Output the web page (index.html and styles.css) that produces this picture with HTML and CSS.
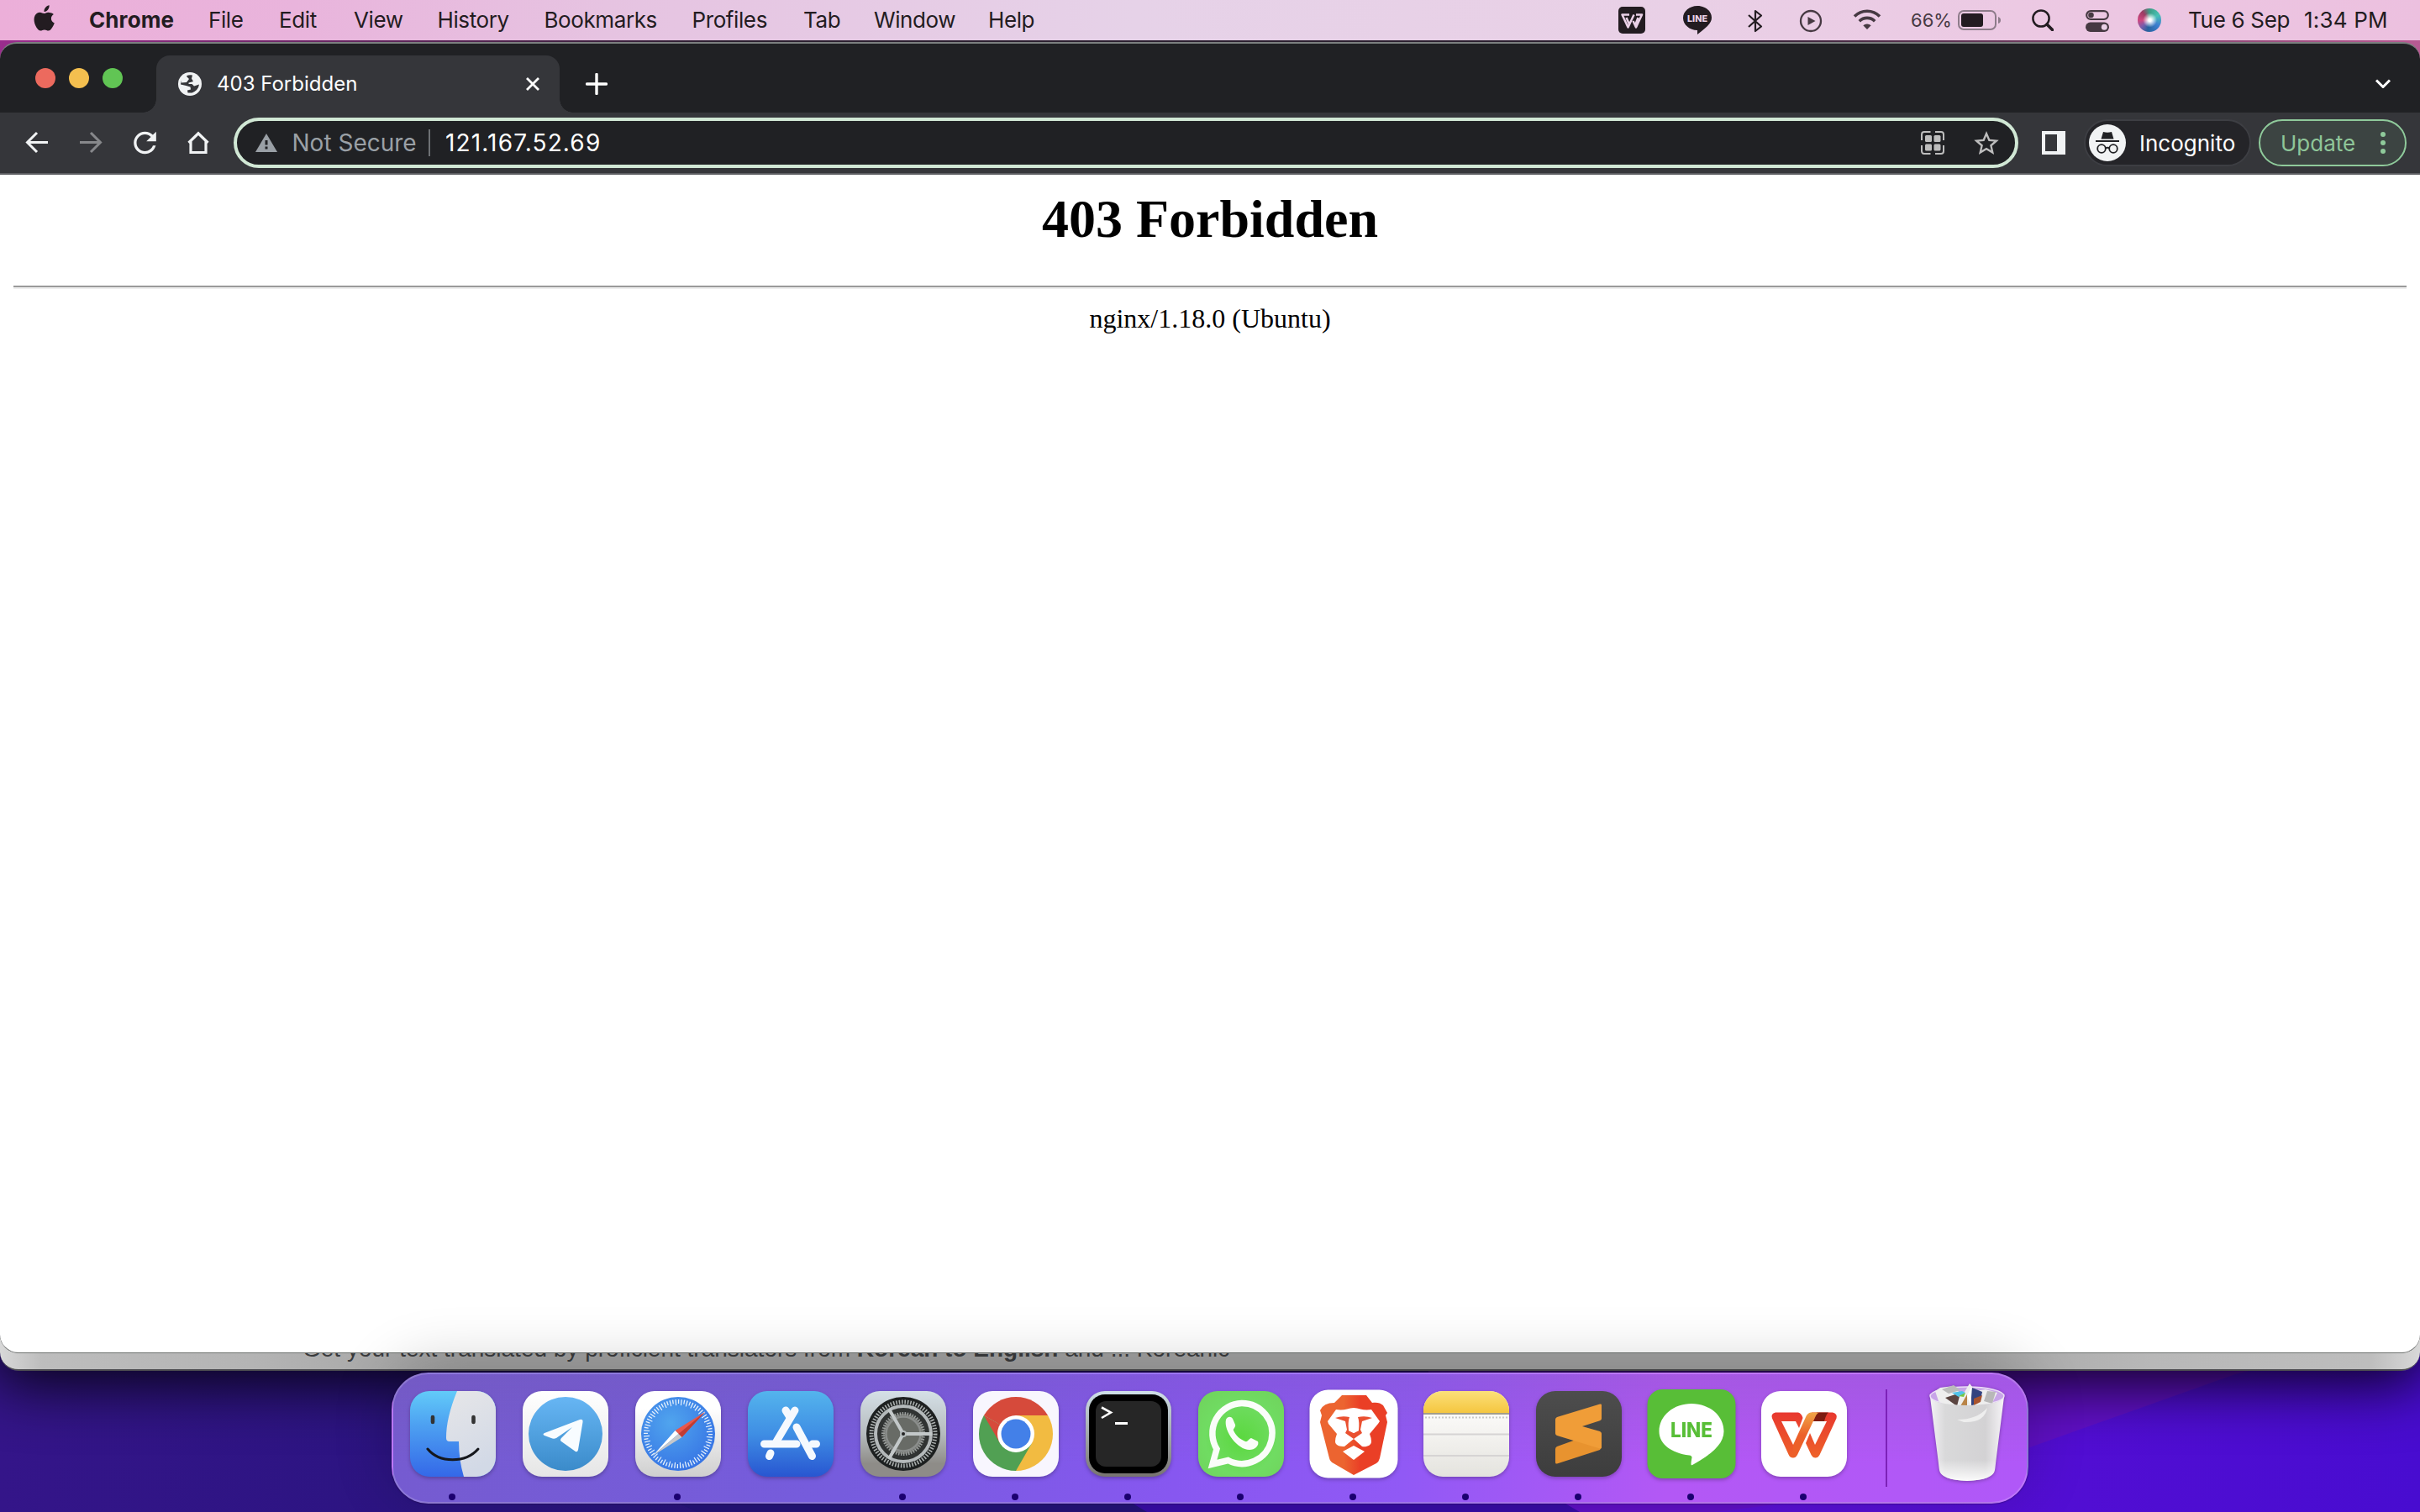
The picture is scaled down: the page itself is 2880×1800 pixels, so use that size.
FILE: index.html
```html
<!DOCTYPE html>
<html lang="en">
<head>
<meta charset="utf-8">
<title>403 Forbidden</title>
<link rel="stylesheet" href="styles.css">
</head>
<body>
<div class="desktop">
  <svg class="wallpaper" viewBox="0 0 2880 200" preserveAspectRatio="none">
    <defs>
      <linearGradient id="wl" x1="0" x2="1"><stop offset="0" stop-color="#341589"/><stop offset=".2" stop-color="#2a1480"/><stop offset="1" stop-color="#1d125e"/></linearGradient>
      <linearGradient id="wr" x1="0" x2="1"><stop offset="0" stop-color="#5b10d6"/><stop offset="1" stop-color="#480cd0"/></linearGradient>
    </defs>
    <rect width="2880" height="200" fill="url(#wl)"/>
    <path d="M700 0V140Q800 186 830 200H2880V0Z" fill="#241478"/>
    <path d="M1100 0L1345 188L1365 200H2880V0Z" fill="#380ca6"/>
    <path d="M1700 100L1863 190L1880 200H2880V0H1700Z" fill="#6010c6"/>
    <path d="M2040 200Q2300 170 2413 124L2480 100L2660 36L2880 -20V200Z" fill="url(#wr)"/>
  </svg>

  <header class="menubar">
    <svg class="apple" viewBox="0 0 26 32"><path d="M18.6 0.3c.2 2.300-.7 4.200-1.900 5.600-1.200 1.300-2.700 2.100-4.200 2-.2-2 .7-3.900 1.800-5.200C15.500 1.300 17.200.500 18.600.3zM23.900 10.900c-2 1.300-3 3-3 5.100 0 2.500 1.400 4.500 3.900 5.500-.6 1.900-1.600 3.800-2.800 5.500-1.200 1.700-2.400 3.500-4.400 3.500-1.900 0-2.500-1.100-4.700-1.100s-2.900 1.100-4.700 1.200c-1.900 0-3.300-1.900-4.600-3.700C1.100 23.200-.7 17 1.600 12.600 2.800 10.300 5 8.800 7.500 8.800c1.900 0 3.600 1.300 4.800 1.300s3.300-1.600 5.500-1.400c1 .1 3.800.4 6.100 2.200z"/></svg>
    <nav class="menus">
      <b class="m-chrome">Chrome</b><span class="m-file">File</span><span class="m-edit">Edit</span><span class="m-view">View</span><span class="m-history">History</span><span class="m-bookmarks">Bookmarks</span><span class="m-profiles">Profiles</span><span class="m-tab">Tab</span><span class="m-window">Window</span><span>Help</span>
    </nav>
    <div class="status">
      <svg width="32" height="32" viewBox="0 0 32 32"><rect width="32" height="32" rx="5" fill="#231c21"/><path d="M13 9.500H4.500L11.500 24.500 18.500 9.500M9.500 13l3.500 8M21 9.500h7L21 24.500 17.500 17M20 22l3.500-9" fill="none" stroke="#ead0e6" stroke-width="2.500" stroke-linejoin="round"/></svg>
      <svg class="s-line" width="34" height="34" viewBox="0 0 34 34"><path d="M17 0c9.500 0 17 6.300 17 14 0 7-6 11-17 20v-5C7.500 29 0 22 0 14.500 0 6.500 7.500 0 17 0z" fill="#231c21"/><text x="17" y="18.500" text-anchor="middle" textLength="24" lengthAdjust="spacingAndGlyphs" class="line-glyph" font-size="11" fill="#ead0e6">LINE</text></svg>
      <svg class="s-bt" width="18" height="28" viewBox="0 0 18 28"><path d="M1 7l15 13.500L9 26V2l7 5.500L1 21" fill="none" stroke="#231c21" stroke-width="2.200" stroke-linejoin="round"/></svg>
      <svg class="s-play" width="28" height="28" viewBox="0 0 28 28"><circle cx="14" cy="14" r="12" fill="none" stroke="#463942" stroke-width="2.300"/><path d="M10.500 9v10l9-5z" fill="#463942"/></svg>
      <svg class="s-wifi" width="34" height="26" viewBox="0 0 34 26"><g fill="none" stroke="#463942" stroke-width="3.600"><path d="M2 9.500a21 21 0 0 1 30 0"/><path d="M7.800 15.200a13 13 0 0 1 18.400 0"/></g><path d="M12.300 20.300a7 7 0 0 1 9.400 0L17 25z" fill="#463942"/></svg>
      <span class="battery-text">66%</span>
      <svg class="s-bat" width="52" height="24" viewBox="0 0 52 24"><rect x="1" y="1" width="44" height="22" rx="6" fill="none" stroke="#8d7c8a" stroke-width="2"/><rect x="4" y="4" width="26" height="16" rx="3" fill="#231c21"/><path d="M48 8v8q3-1 3-4t-3-4z" fill="#8d7c8a"/></svg>
      <svg class="s-search" width="26" height="26" viewBox="0 0 26 26"><circle cx="11" cy="11" r="9.600" fill="none" stroke="#231c21" stroke-width="2.500"/><path d="M18 18l6.500 6.500" stroke="#231c21" stroke-width="3.600" stroke-linecap="round"/></svg>
      <svg class="s-cc" width="28" height="26" viewBox="0 0 28 26"><rect x="1.200" y="1.200" width="25.600" height="9.800" rx="4.900" fill="none" stroke="#463942" stroke-width="2.200"/><circle cx="6.500" cy="6" r="3.300" fill="#463942"/><rect y="14.500" width="28" height="11.500" rx="5.700" fill="#463942"/><circle cx="22.300" cy="20.300" r="3.500" fill="#ead0e6"/></svg>
      <span class="siri"></span>
      <span class="date">Tue 6 Sep</span><span class="time">1:34 PM</span>
    </div>
  </header>

  <section class="back-window"><p>Get your text translated by proficient translators from <b>Korean to English</b> and ... Koreanic</p></section>

  <section class="browser">
    <div class="tabstrip">
      <div class="lights"><i class="red"></i><i class="yellow"></i><i class="green"></i></div>
      <div class="tab">
        <svg width="28" height="28" viewBox="0 0 28 28"><circle cx="14" cy="14" r="14" fill="#f1f3f4"/><path d="M10.500 4Q13 3 17 3.500L16 7.500 18 11 12.500 12.500 12.500 14 16.500 14 19 16.500 25 14.500Q24 21.500 16.500 24.500L11.500 24.500 11 21.500 15 20.500 14.500 17.500 9.500 16 3 14.500Q3 12 4 10L9 12 11.500 9.500 9.500 7.500Z" fill="#35363a"/><path d="M3.500 12.500Q5 6 9.500 4.500l3.500 3.500-3 4z" fill="#f1f3f4"/></svg>
        <span class="tab-title">403 Forbidden</span>
        <svg width="18" height="18" viewBox="0 0 18 18"><path d="M2 2l14 14M16 2L2 16" stroke="#fff" stroke-width="2.800"/></svg>
      </div>
      <svg class="plus" width="26" height="26" viewBox="0 0 26 26"><path d="M13 1.500v23M1.500 13h23" stroke="#fff" stroke-width="3.400" stroke-linecap="round"/></svg>
      <svg class="chev" width="20" height="14" viewBox="0 0 20 14"><path d="M2 2.500l8 8 8-8" fill="none" stroke="#fff" stroke-width="3" stroke-linejoin="round"/></svg>
    </div>
    <div class="toolbar">
      <svg class="nav" width="64" height="40" viewBox="0 0 64 40"><path d="M45 20H21M32 8.500L20.500 20 32 31.500" transform="translate(12 -.5)" fill="none" stroke="#f1f3f4" stroke-width="3"/></svg>
      <svg class="nav" width="64" height="40" viewBox="0 0 64 40"><path d="M19 20h24M32 8.500L43.500 20 32 31.500" transform="translate(12 -.5)" fill="none" stroke="#87888b" stroke-width="3"/></svg>
      <svg class="nav" width="64" height="40" viewBox="0 0 64 40"><path transform="translate(24.500) scale(1.667)" d="M17.650 6.350C16.200 4.900 14.210 4 12 4c-4.420 0-7.990 3.580-7.990 8s3.570 8 7.990 8c3.730 0 6.840-2.550 7.730-6h-2.080c-.82 2.330-3.040 4-5.650 4-3.310 0-6-2.690-6-6s2.690-6 6-6c1.660 0 3.140.69 4.220 1.780L13 11h7V4l-2.350 2.350z" fill="#f1f3f4"/></svg>
      <svg class="nav" width="64" height="40" viewBox="0 0 64 40"><path d="M32.500 20L44 8.800 55.500 20M35 18v13.500h18V18" fill="none" stroke="#f1f3f4" stroke-width="3.200"/></svg>
      <div class="omnibox">
        <svg width="26" height="22" viewBox="0 0 26 22"><path d="M13 0l13 22H0z" fill="#9aa0a6"/><path d="M11.500 8h3v5.500h-3zM11.500 15.500h3v3h-3z" fill="#202124"/></svg>
        <span class="notsecure">Not Secure</span><i class="bar"></i><span class="url">121.167.52.69</span>
        <svg class="qr" width="28" height="28" viewBox="0 0 28 28"><path d="M1 11V4q0-3 3-3h7.500M17 1h7q3 0 3 3v7M27 17v7q0 3-3 3h-7M11.500 27H4q-3 0-3-3v-7" fill="none" stroke="#bdbdbd" stroke-width="2"/><g fill="#bdbdbd"><rect x="5" y="5" width="8" height="8" rx="1.500"/><rect x="15.500" y="5" width="8" height="8" rx="1.500"/><rect x="5" y="15.500" width="8" height="8" rx="1.500"/><rect x="15.500" y="15.500" width="8" height="8" rx="1.500"/></g></svg>
        <svg width="30" height="28" viewBox="2 2 20 19"><path d="M22 9.240l-7.190-.62L12 2 9.190 8.630 2 9.240l5.460 4.730L5.820 21 12 17.270 18.180 21l-1.630-7.030L22 9.240zM12 15.400l-3.760 2.270 1-4.280-3.320-2.880 4.380-.38L12 6.100l1.710 4.040 4.380.38-3.320 2.880 1 4.280L12 15.400z" fill="#bdbdbd"/></svg>
      </div>
      <svg class="panel" width="28" height="28" viewBox="0 0 28 28"><path fill-rule="evenodd" d="M0 0h28v28H0zM4 4v20h14V4z" fill="#f1f3f4"/></svg>
      <div class="incognito">
        <svg width="44" height="44" viewBox="0 0 44 44"><circle cx="22" cy="22" r="22" fill="#f1f3f4"/><path d="M17 9q5 1.500 10 0l2.500 8.500h-15z" fill="#202124"/><path d="M8 20h28" stroke="#202124" stroke-width="1.800"/><g fill="none" stroke="#202124" stroke-width="1.800"><circle cx="15" cy="29" r="4.800"/><circle cx="29" cy="29" r="4.800"/><path d="M19.500 28.500q2.500-1.500 5 0"/></g></svg>
        <span>Incognito</span>
      </div>
      <div class="update"><span>Update</span><i></i></div>
    </div>
    <main class="page">
      <h1>403 Forbidden</h1>
      <hr>
      <p>nginx/1.18.0 (Ubuntu)</p>
    </main>
  </section>

  <footer class="dock">
    <div class="app on"><svg viewBox="-2 -2 106 106">
      <defs><clipPath id="sq"><rect width="102" height="102" rx="23"/></clipPath>
      <linearGradient id="fb" x2="0" y2="1"><stop stop-color="#62cbf9"/><stop offset=".4" stop-color="#4da0f1"/><stop offset="1" stop-color="#3468e8"/></linearGradient>
      <linearGradient id="fw" x2=".3" y2="1"><stop stop-color="#e6e6e8"/><stop offset="1" stop-color="#d2d9e6"/></linearGradient></defs>
      <g clip-path="url(#sq)"><rect width="102" height="102" fill="url(#fb)"/><path d="M56 0C47 22 43 40 43 56q0 4 4 4h11q0 22 6 42h38V0z" fill="url(#fw)"/></g>
      <path d="M27 31v6M75.500 31v6" stroke="#333" stroke-width="4.600" stroke-linecap="round"/><path d="M21 69c14 17 45 17 60 0" fill="none" stroke="#15171c" stroke-width="3" stroke-linecap="round"/></svg></div>
    <div class="app"><svg viewBox="-2 -2 106 106">
      <defs><linearGradient id="wh" x2="0" y2="1"><stop stop-color="#fff"/><stop offset="1" stop-color="#e6e6e6"/></linearGradient><linearGradient id="tg" x2="0" y2="1"><stop stop-color="#67b6f4"/><stop offset="1" stop-color="#3b8bca"/></linearGradient></defs>
      <rect width="102" height="102" rx="23" fill="url(#wh)"/><circle cx="51" cy="51" r="44" fill="url(#tg)"/><path d="M26 50L68 34q4-1 3.500 3L66 70q-1 4-4.500 1L46 60q-2-1.500 0-4L59 43 40 56q-3 1.500-6 0l-8-3q-3-1.500 0-3z" fill="#f8fcff"/></svg></div>
    <div class="app on"><svg viewBox="-2 -2 106 106">
      <defs><linearGradient id="wg" x2="0" y2="1"><stop offset=".2" stop-color="#fff"/><stop offset="1" stop-color="#cfcfcf"/></linearGradient><radialGradient id="sf" cx=".4" cy=".35" r=".7"><stop stop-color="#50a5ee"/><stop offset="1" stop-color="#3673e4"/></radialGradient></defs>
      <rect width="102" height="102" rx="23" fill="url(#wg)"/><circle cx="51" cy="51" r="44" fill="url(#sf)"/><circle cx="51" cy="51" r="38.500" fill="none" stroke="#e6f1fc" stroke-width="5" stroke-dasharray="1.300 5.420" pathLength="242"/><circle cx="51" cy="51" r="37.500" fill="none" stroke="#e6f1fc" stroke-width="7" stroke-dasharray="1.300 5.420" stroke-dashoffset="3.360" pathLength="242"/><path d="M83 25L47.500 47l8 8z" fill="#e9574c"/><path d="M83 25L51.500 51l4 4z" fill="#c03c33"/><path d="M21 77l26.500-30 4 4z" fill="#fff"/><path d="M21 77l34.500-22-4-4z" fill="#c6c8cb"/></svg></div>
    <div class="app"><svg viewBox="-2 -2 106 106">
      <defs><linearGradient id="as" x2="0" y2="1"><stop stop-color="#54b4ed"/><stop offset=".5" stop-color="#3f8ee4"/><stop offset="1" stop-color="#2856d1"/></linearGradient></defs>
      <rect width="102" height="102" rx="23" fill="url(#as)"/><g stroke="#f5f9fe" stroke-width="9" stroke-linecap="round" fill="none"><path d="M45 23l5 8"/><path d="M56 23L34 60"/><path d="M19.500 63H58M77 63h4.500"/><path d="M27 74l-1.500 3.500"/><path d="M58 43l18.500 34.500"/></g></svg></div>
    <div class="app on"><svg viewBox="-2 -2 106 106">
      <defs><linearGradient id="sg" x2="0" y2="1"><stop stop-color="#d5e0e7"/><stop offset=".5" stop-color="#b5bbbd"/><stop offset=".85" stop-color="#8e8c88"/></linearGradient></defs>
      <rect width="102" height="102" rx="23" fill="url(#sg)"/><circle cx="51" cy="51" r="44" fill="#1d2020"/><circle cx="51" cy="51" r="38" fill="none" stroke="#a9aead" stroke-width="5" stroke-dasharray="1.600 1.800"/><circle cx="51" cy="51" r="33" fill="#303332" stroke="#b4b9ba" stroke-width="4"/><circle cx="51" cy="51" r="24" fill="#6b6d69" stroke="#9a9e9c" stroke-width="4" stroke-dasharray="1.500 1.500"/><circle cx="51" cy="51" r="20.500" fill="#686b66" stroke="#8a8d8b" stroke-width="2.500"/><path d="M51 51h34M51 51L34 21.500M51 51L34 80.500" stroke="#c3c8c9" stroke-width="4"/><circle cx="51" cy="51" r="4" fill="#b5bbbc"/><circle cx="51" cy="51" r="2" fill="#222"/></svg></div>
    <div class="app on"><svg viewBox="-2 -2 106 106">
      <rect width="102" height="102" rx="23" fill="#f8f6fe"/><path d="M51 51L12.900 29A44 44 0 0 1 89.100 29z" fill="#d64a3b"/><path d="M51 51L89.100 29A44 44 0 0 1 51 95z" fill="#f2bb41"/><path d="M51 51L51 95A44 44 0 0 1 12.900 29z" fill="#51a053"/><path d="M89.100 29H51v22h19z" fill="#f2bb41"/><path d="M12.900 29L32 62l19-11z" fill="#d64a3b"/><path d="M51 95l19-33-15 8-23-8z" fill="#51a053"/><circle cx="51" cy="51" r="22" fill="#fff"/><circle cx="51" cy="51" r="17.500" fill="#4380e8"/></svg></div>
    <div class="app on"><svg viewBox="-2 -2 106 106">
      <defs><linearGradient id="tm" x2="0" y2="1"><stop stop-color="#cfdfe8"/><stop offset="1" stop-color="#77736f"/></linearGradient></defs>
      <rect width="102" height="102" rx="23" fill="url(#tm)"/><rect x="4" y="4" width="94" height="94" rx="19" fill="#000"/><rect x="12" y="12" width="78" height="78" rx="12" fill="#262626"/><path d="M19 19.500l11 6-11 6.500" fill="none" stroke="#fff" stroke-width="2.600"/><path d="M35 38.500h15" stroke="#fff" stroke-width="3"/></svg></div>
    <div class="app on"><svg viewBox="-2 -2 106 106">
      <defs><radialGradient id="wa" cx=".5" cy=".55" r=".65"><stop stop-color="#5bd83f"/><stop offset=".65" stop-color="#70dc62"/><stop offset="1" stop-color="#70d45e"/></radialGradient></defs>
      <rect width="102" height="102" rx="23" fill="url(#wa)"/><path d="M51.500 14.500a36 36 0 1 1-16 68L17 87l5-18a36 36 0 0 1 29.500-54.500z" fill="none" stroke="#fafdf9" stroke-width="7.500"/><path d="M33 34c2-4 6-4 8-1l3 7c1 3-3 5-2 7 3 6 7 10 14 13 3 1 5-4 7-4l8 4c2 5-4 10-10 10C47 70 30 48 33 34z" fill="#fafdf9"/></svg></div>
    <div class="app on"><svg viewBox="-2 -2 106 106">
      <defs><linearGradient id="br"><stop offset=".35" stop-color="#ec6430"/><stop offset=".6" stop-color="#ea3f26"/></linearGradient></defs>
      <rect x="-1.500" y="-1.500" width="105" height="105" rx="22" fill="#fff"/><path d="M37 5h29l7 9c5-1 10 0 13 3l5 9-2 3 2 8-9 43q-1 4-4 6L51 100 27 86q-4-2-5-6L11 37l2-8-2-6q4-9 17-9z" fill="url(#br)"/><path d="M30 22q7 1 13-.5 4-1.500 8-1.500t8 1.500q6 1.500 13 .5l10 14-2 3-10 12q2 5 2 9c0 5-6 7-11 6L51 57 40 66c-5 0-11-1-11-6q0-4 2-9L21 39l-1-3z" fill="#fff"/><path d="M29 32q8-3 17-1-2 5-1 16l6 3 6-3q1-11-1-16 9-2 17 1l-12 4-2 10 2 4-10 7-10-7 2-4-2-10z" fill="#ea5030"/><path d="M47 31h8l2 16-6 3-6-3z" fill="#fff"/><path d="M51 65l13 7-13 10-13-10z" fill="#fff"/></svg></div>
    <div class="app on"><svg viewBox="-2 -2 106 106">
      <defs><linearGradient id="ny" x2="0" y2="1"><stop stop-color="#fbe07a"/><stop offset="1" stop-color="#f5c63f"/></linearGradient><linearGradient id="nw" x2="0" y2="1"><stop offset=".3" stop-color="#faf9f7"/><stop offset="1" stop-color="#e4e3de"/></linearGradient></defs>
      <g clip-path="url(#sq)"><rect width="102" height="102" fill="url(#nw)"/><rect width="102" height="26" fill="url(#ny)"/><path d="M0 27h102" stroke="#a39e8b" stroke-width="2"/><path d="M2 31.500h100" stroke="#c9c9c7" stroke-width="2" stroke-dasharray="2 2"/><path d="M0 51.500h102M0 77h102" stroke="#d6d4d4" stroke-width="2"/></g></svg></div>
    <div class="app on"><svg viewBox="-2 -2 106 106">
      <defs><linearGradient id="sb" x1="0" y1="0" x2="0" y2="1"><stop stop-color="#4d4d4d"/><stop offset="1" stop-color="#3d3d3d"/></linearGradient></defs>
      <rect width="102" height="102" rx="23" fill="url(#sb)"/><path d="M25 66L50 57l27 9q1 2-1 4L25 86.500q-2 .5-2-1.500V69q0-2 2-3z" fill="#e8932f"/><path d="M25 31L76 15.500q2-.5 2 1V33q0 1.500-2 2.200L55 42l21 6q2 1 2 2.500V67q0 2-2 1.500L25 53q-2-1-2-2.500V34q0-2 2-3z" fill="#f09d38"/></svg></div>
    <div class="app on"><svg viewBox="-2 -2 106 106">
      <rect x="-1.500" y="-2" width="105" height="106" rx="18" fill="#58be37"/><path d="M51 15c21 0 38.500 14 38.500 33C89.500 63 75 75 53 87.500c-3 2-3 0-1.500-8.500q0-2-3-2.500C27 74 12.500 63 12.500 48 12.500 29 30 15 51 15z" fill="#fff"/><text x="51" y="55" text-anchor="middle" textLength="50" lengthAdjust="spacingAndGlyphs" class="line-glyph" font-size="24" fill="#58be37">LINE</text></svg></div>
    <div class="app on"><svg viewBox="-2 -2 106 106">
      <defs><linearGradient id="wp" gradientUnits="userSpaceOnUse" x1="0" y1="26" x2="0" y2="79"><stop stop-color="#e8382f"/><stop offset="1" stop-color="#ee6229"/></linearGradient><linearGradient id="wo" x2="0" y2="1"><stop stop-color="#f0a546"/><stop offset=".5" stop-color="#ec6029"/></linearGradient></defs>
      <rect width="102" height="102" rx="23" fill="#fff"/><path d="M17 25.500h27q4 1 5.500 6.500L45 44l-4-8H24L38 64v15.500q-4 0-5.500-4L13 32.500Q11 27 17 25.500z" fill="url(#wp)"/><path d="M60 25.500h25q6 1.500 4.500 7L69.500 76q-2 3.500-5 3.500t-5-3.500L53 62l5-12 6 14 14-28H62z" fill="url(#wp)"/><path d="M66 25.500h14Q77 28 75 36H62z" fill="#7d1c12"/><path d="M59 25.500h10q-3 1-5 6L43 76q-2 3.500-5 3.500V64L53 31q2-5 6-5.500z" fill="url(#wo)"/></svg></div>
    <i class="divider"></i>
    <div class="trash"><svg viewBox="0 0 92 120">
      <defs><linearGradient id="tr"><stop stop-color="#f4f2f6"/><stop offset=".2" stop-color="#d9d9da"/><stop offset=".75" stop-color="#d3d2d4"/><stop offset="1" stop-color="#f6f4f7"/></linearGradient><linearGradient id="trw" x2="0" y2="1"><stop offset=".75" stop-color="#fff" stop-opacity="0"/><stop offset="1" stop-color="#fff" stop-opacity=".9"/></linearGradient></defs>
      <ellipse cx="46" cy="18" rx="44" ry="11" fill="#c8a5e8" stroke="#ecdff7" stroke-width="1.500"/>
      <path d="M8 12l4 12 10 6 18 2 20-2 16-4 6-12-14-4-12 2-7-9-9 15-6-8-4-4-16 2z" fill="#eee"/><path d="M16 10l14-5 8 6-14 4z" fill="#bbb"/><path d="M20 20l18-6-4 16z" fill="#5b4541"/><path d="M28 14l12-2 4 2-8 5z" fill="#50c3ea"/><path d="M36 18l8-4-2 5z" fill="#76c640"/><path d="M38 30l8-14v16z" fill="#b98447"/><path d="M52 8l12 5-2 10-12 8z" fill="#34437f"/><path d="M54 21l10-4-2 8-8 4z" fill="#a7532e"/><path d="M70 12l10 1-4 14-10-3z" fill="#b8b8b8"/><path d="M46 18l5-11v24z" fill="#fff"/>
      <path d="M2 19q4 9 44 10 40-1 44-10L79 106q-2 12-33 13-31-1-33-13z" fill="url(#tr)"/><path d="M2 19q4 9 44 10 40-1 44-10L79 106q-2 12-33 13-31-1-33-13z" fill="url(#trw)"/><path d="M34 46q24 0 36-14-3 18-28 17z" fill="#eee"/></svg></div>
  </footer>
</div>
</body>
</html>
```
FILE: styles.css
```css
* { box-sizing: border-box; }
body { margin: 0; font-family: Inter, "Liberation Sans", sans-serif; }
svg { display: block; flex: none; }
i { display: block; flex: none; }

.desktop {
  position: relative;
  width: 2880px;
  height: 1800px;
  overflow: hidden;
  background: linear-gradient(90deg, #9a2d8d, #2c2030 30%, #2c2030 70%, #b85a93);
}
.wallpaper { position: absolute; left: 0; bottom: 0; width: 2880px; height: 200px; }

.menubar {
  display: flex;
  align-items: center;
  height: 48px;
  padding-bottom: 1px;
  color: #231c21;
  font-size: 26px;
  line-height: 46px;
  white-space: nowrap;
  background: linear-gradient(90deg, #ecafd9 0, #e9b4dc 350px, #e6c3e1 720px, #e6d2e8 1350px, #e9d0e6 2000px, #ecc9e3 2400px, #ecc0df 2880px);
}
.apple { width: 26px; height: 32px; margin: -3px 0 0 40px; fill: #231c21; }
.menus { display: flex; margin-left: 40px; letter-spacing: -.4px; }
.m-chrome { width: 142px; letter-spacing: .1px; }
.m-file { width: 84px; }
.m-edit { width: 89px; }
.m-view { width: 99.5px; }
.m-history { width: 127px; }
.m-bookmarks { width: 176px; }
.m-profiles { width: 132.5px; }
.m-tab { width: 84px; }
.m-window { width: 136px; }
.status { display: flex; align-items: center; margin-left: auto; width: 954px; }
.s-line { margin-left: 45px; }
.s-bt { margin: 3px 0 0 43px; }
.s-play { margin: 3px 0 0 42.5px; }
.s-wifi { margin: -1px 0 0 36.5px; }
.battery-text { width: 56px; margin-left: 35px; color: #463942; font-size: 22px; }
.s-search { margin-left: 36px; }
.s-cc { margin: 3px 0 0 38px; }
.siri {
  width: 28px;
  height: 28px;
  margin-left: 34px;
  border-radius: 50%;
  background: radial-gradient(circle at 52% 50%, #fff 8%, rgba(255,255,255,0) 42%), conic-gradient(#3c9c84, #49c1b5 60deg, #3d7fd0 120deg, #27629e 190deg, #7c5cab 230deg, #d04880 270deg, #9d3b63 320deg, #3c9c84);
}
.date { width: 138px; margin-left: 32px; letter-spacing: -.3px; }
.time { letter-spacing: .2px; }
.line-glyph { font-family: Inter, sans-serif; font-weight: 800; }

.back-window {
  position: absolute;
  left: 0;
  top: 1500px;
  width: 2880px;
  height: 132px;
  overflow: hidden;
  border-radius: 0 0 22px 22px;
  border-bottom: 2px solid #4c4c50;
  background: linear-gradient(90deg, #d8d8d8, #bdbdbd 50px, #b4b4b4 300px, #a2a2a2 560px, #a2a2a2 2300px, #b8b8b8 2560px, #bdbdbd 2820px, #d8d8d8);
  box-shadow: 0 10px 70px 6px rgba(0, 0, 0, .85);
}
.back-window p {
  margin: 87px 0 0 360px;
  color: #3a3b3d;
  font: 28px/38px "Liberation Sans", sans-serif;
  white-space: nowrap;
}

.browser {
  position: absolute;
  left: 0;
  top: 50px;
  width: 2880px;
  height: 1561px;
  overflow: hidden;
  border-radius: 20px 20px 22px 22px;
  border-top: 2px solid #7c8080;
  border-bottom: 1px solid #6f7370;
  background: #202124;
}
.tabstrip { display: flex; align-items: center; height: 82px; }
.lights { display: flex; gap: 16px; width: 186px; padding-left: 42px; }
.lights i { width: 24px; height: 24px; border-radius: 50%; }
.red { background: #ec6a5e; }
.yellow { background: #f4bf4f; }
.green { background: #61c554; }
.tab {
  position: relative;
  display: flex;
  align-items: center;
  align-self: flex-end;
  width: 480px;
  height: 68px;
  padding: 0 23px 0 26px;
  border-radius: 16px 16px 0 0;
  background: #35363a;
}
.tab::before, .tab::after {
  content: "";
  position: absolute;
  bottom: 0;
  width: 16px;
  height: 16px;
}
.tab::before { left: -16px; background: radial-gradient(circle at 0 0, #202124 15.5px, #35363a 16px); }
.tab::after { right: -16px; background: radial-gradient(circle at 100% 0, #202124 15.5px, #35363a 16px); }
.tab-title { flex: 1; margin: -1px 0 0 18px; color: #fff; font-size: 24px; }
.plus { margin: 13px 0 0 31px; }
.chev { margin: 14px 34px 0 auto; }

.toolbar {
  display: flex;
  align-items: center;
  height: 72px;
  background: #35363a;
}
.omnibox {
  display: flex;
  align-items: center;
  width: 2124px;
  height: 60px;
  margin-left: 22px;
  padding: 0 19px 0 22px;
  border: 4px solid #d1e8d5;
  border-radius: 30px;
  background: #202124;
  color: #9aa0a6;
  font-size: 28px;
}
.notsecure { width: 162px; margin-left: 17.5px; }
.bar { width: 2px; height: 32px; background: #6d7074; }
.url { margin-left: 18.5px; color: #fff; letter-spacing: 1.15px; }
.qr { margin: 0 35px 0 auto; }
.panel { margin-left: 28px; }
.incognito {
  display: flex;
  align-items: center;
  width: 199px;
  height: 56px;
  margin-left: 22px;
  padding-left: 4px;
  border: 2px solid #3d3e43;
  border-radius: 28px;
  background: #242428;
  color: #fff;
  font-size: 26px;
}
.incognito span { margin-left: 16px; }
.update {
  display: flex;
  align-items: center;
  width: 176px;
  height: 56px;
  margin-left: 9px;
  padding-left: 24px;
  border: 2px solid #8fca9b;
  border-radius: 28px;
  background: #3c4442;
  color: #8fc699;
  font-size: 26px;
}
.update i {
  width: 6px;
  height: 6px;
  margin-left: auto;
  margin-right: 23px;
  border-radius: 50%;
  background: #8fca9b;
  box-shadow: 0 -10px #8fca9b, 0 10px #8fca9b;
}

.page {
  height: 1404px;
  padding: 16px;
  border-top: 2px solid #5c5d61;
  background: #fff;
  color: #000;
  font-family: "Liberation Serif", serif;
  text-align: center;
}
.page h1 { margin: 0; font-size: 64px; line-height: 74px; }
.page hr { height: 4px; margin: 42px 0 0; border: 0; border-top: 2px solid #9a9a9a; border-bottom: 2px solid #eee; }
.page p { margin: 17px 0 0; font-size: 32px; line-height: 37px; }

.dock {
  position: absolute;
  left: 466px;
  top: 1634px;
  display: flex;
  width: 1948px;
  height: 156px;
  padding: 20px 0 0 18px;
  border: 2px solid rgba(255, 255, 255, .18);
  border-radius: 44px;
  background: linear-gradient(180deg, rgba(110, 85, 150, .2), rgba(110, 85, 150, 0) 70%), linear-gradient(96deg, #755bd0 0, #765cdd 28%, #8757f0 48%, #9159f5 62%, #b358f5 78%, #b058f8 100%);
  background-clip: border-box;
  box-shadow: 0 0 2px #180838, 0 -10px 70px rgba(0, 0, 0, .2);
}
.app { position: relative; width: 106px; height: 130px; margin-right: 28px; flex: none; }
.app svg { width: 106px; height: 106px; overflow: visible; filter: drop-shadow(0 2px 2px rgba(0, 0, 0, .25)); margin-top: -2px; }
.on::after {
  content: "";
  position: absolute;
  left: 48px;
  top: 122px;
  width: 8px;
  height: 8px;
  border-radius: 50%;
  background: #1b0070;
}
.divider { width: 2px; height: 116px; margin: -2px 0 0 16px; background: #7c22b8; }
.trash { margin: -12px 0 0 49px; }
.trash svg { width: 92px; height: 120px; filter: drop-shadow(0 1px 2px rgba(0, 0, 0, .3)); }
```
